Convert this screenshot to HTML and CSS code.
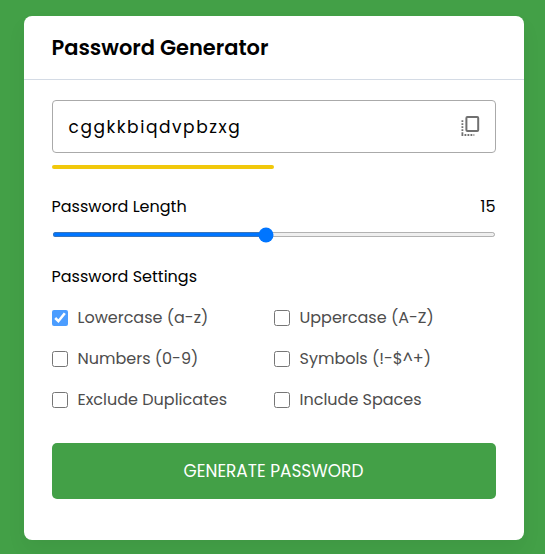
FILE: index.html
```html
<!DOCTYPE html>
<html lang="en">
<head>
<meta charset="utf-8">
<title>Password Generator</title>
<link rel="stylesheet" href="styles.css">
</head>
<body>
<main class="container">
  <h2 class="title">Password Generator</h2>
  <div class="wrapper">
    <div class="input-box">
      <span class="password">cggkkbiqdvpbzxg</span>
      <svg class="copy" width="20" height="21" viewBox="0 0 20 21" fill="none" aria-label="Copy">
        <rect x="5.4" y="1" width="11.8" height="14" rx="1" stroke="#707070" stroke-width="2"/>
        <path d="M1.4 4.3v15.4M.5 19h12.8" stroke="#707070" stroke-width="1.8" stroke-dasharray="1.8 1.2"/>
      </svg>
    </div>
    <div class="pass-indicator"></div>
    <div class="details"><span>Password Length</span><span>15</span></div>
    <input class="slider" type="range" min="1" max="30" value="15" aria-label="Password Length">
    <p class="settings-title">Password Settings</p>
    <ul class="options">
      <li><input type="checkbox" id="lowercase" class="locked" checked><label for="lowercase">Lowercase (a-z)</label></li>
      <li><input type="checkbox" id="uppercase"><label for="uppercase">Uppercase (A-Z)</label></li>
      <li><input type="checkbox" id="numbers"><label for="numbers">Numbers (0-9)</label></li>
      <li><input type="checkbox" id="symbols"><label for="symbols">Symbols (!-$^+)</label></li>
      <li><input type="checkbox" id="duplicates"><label for="duplicates">Exclude Duplicates</label></li>
      <li><input type="checkbox" id="spaces"><label for="spaces">Include Spaces</label></li>
    </ul>
    <button class="generate">GENERATE PASSWORD</button>
  </div>
</main>
</body>
</html>
```
FILE: styles.css
```css
* { box-sizing: border-box; margin: 0; padding: 0; }
body {
  min-height: 554px;
  padding: 16px 21px 14px 24px;
  background: #43a047;
  color: #000;
  font-family: Poppins, Inter, sans-serif;
  font-size: 16px;
  overflow: hidden;
}
.container {
  width: 500px;
  height: 524px;
  background: #fff;
  border-radius: 8px;
  box-shadow: 0 10px 20px rgba(0, 0, 0, 0.05);
}
.title {
  height: 64px;
  padding-left: 27.5px;
  border-bottom: 1px solid #d4dbe5;
  font-size: 20.96px;
  line-height: 63px;
  font-weight: 600;
}
.wrapper { padding: 20px 28px 0; }
.input-box {
  display: flex;
  align-items: center;
  justify-content: space-between;
  height: 53px;
  padding: 0 14px 0 15.5px;
  border: 1px solid #aaa;
  border-radius: 4px;
}
.password { font-size: 17px; letter-spacing: 1.56px; }
.pass-indicator {
  width: 222px;
  height: 4px;
  margin-top: 12px;
  border-radius: 4px;
  background: #f1c80b;
}
.details {
  display: flex;
  justify-content: space-between;
  height: 24px;
  margin: 25px 0.5px 0 -0.5px;
  line-height: 25px;
}
.slider { display: block; width: 443.5px; height: 5px; margin: 14px 0 0; }
.settings-title { height: 24px; margin: 27px 0 0 -0.5px; line-height: 25px; }
.options {
  display: grid;
  grid-template-columns: 222px 222px;
  row-gap: 17px;
  margin-top: 18px;
  list-style: none;
}
.options li { display: flex; align-items: center; height: 24px; color: #4d4d4d; }
.options input { width: 16px; height: 16px; flex: none; }
.options label { padding-left: 9.5px; line-height: 24px; white-space: nowrap; }
.locked { opacity: 0.7; }
.generate {
  display: block;
  width: 444px;
  height: 56px;
  margin-top: 31px;
  padding-right: 1px;
  border: 0;
  border-radius: 5px;
  background: #43a047;
  color: #fff;
  font: 400 16.96px Poppins, Inter, sans-serif;
}
```
